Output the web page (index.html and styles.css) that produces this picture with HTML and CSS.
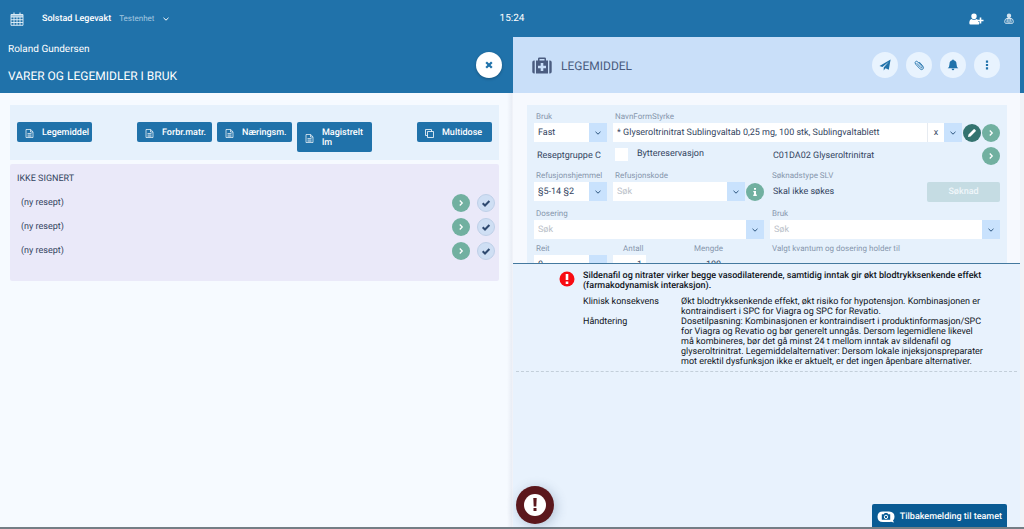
FILE: index.html
```html
<!DOCTYPE html>
<html lang="no">
<head>
<meta charset="utf-8">
<meta name="viewport" content="width=device-width, initial-scale=1">
<title>Legemiddel</title>
<link rel="stylesheet" href="styles.css">
</head>
<body>
<svg class="sprite" aria-hidden="true">
  <symbol id="chevron-down" viewBox="0 0 8 8"><path d="M1.500 2.800 4 5.200l2.500-2.400" fill="none" stroke="currentColor"/></symbol>
  <symbol id="chevron-right" viewBox="0 0 8 8"><path d="M3 2 5 4 3 6" fill="none" stroke="currentColor"/></symbol>
  <symbol id="doc" viewBox="0 0 8 9"><path d="M.5.500h4.700L7.500 2.800v5.700h-7zM5 .5V3h2.500M2 4.500h4M2 6h4M2 7.200h4" fill="none" stroke="currentColor" stroke-width=".7"/></symbol>
  <symbol id="check" viewBox="0 0 10 10"><path d="m1.700 5.200 2.300 2.300L8.400 3" fill="none" stroke="currentColor" stroke-width="2"/></symbol>
</svg>

<header class="topbar">
  <div class="topbar-unit">
    <svg class="calendar" viewBox="0 0 14 14" role="img" aria-label="Kalender"><path d="M1 2.500h12v10.800H1zM1 5h12M1 7.700h12M1 10.500h12M4 5v8.300M7 5v8.300M10 5v8.300" fill="none" stroke="currentColor" stroke-width=".9"/><path d="M3.200.5h1.600v3H3.200zM9.200.5h1.600v3H9.200zM1 2.500h12V5H1z" fill="currentColor" opacity=".65"/></svg>
    <strong>Solstad Legevakt</strong>
    <span class="unit-name">Testenhet</span>
    <svg class="icon-s"><use href="#chevron-down"/></svg>
  </div>
  <time>15:24</time>
  <div class="topbar-user">
    <svg class="add-user" viewBox="0 0 15 12" role="img" aria-label="Ny pasient"><path d="M5 .5a2.700 2.700 0 0 1 2.700 2.900C7.700 5 6.500 6.200 5 6.200S2.300 5 2.300 3.400A2.700 2.700 0 0 1 5 .5zM2.600 6c1.500 1.200 3.300 1.200 4.800 0 .8.200 1.400.7 1.800 1.400v1.500h1v2.100q-.4.500-1.200.5H1.500Q.3 11.500.3 10 .4 6.500 2.600 6z" fill="currentColor"/><path d="M11.500 4.500v6M8.500 7.500h6" stroke="currentColor" stroke-width="1.600"/></svg>
    <svg class="doctor" viewBox="0 0 10 11" role="img" aria-label="Bruker"><path d="M5 .6a2.200 2.200 0 0 1 2.200 2.200C7.200 4.200 6.200 5.300 5 5.300S2.800 4.200 2.800 2.800A2.200 2.200 0 0 1 5 .6z" fill="currentColor" opacity=".8"/><path d="M2.600 5.500h4.800q1.800.4 1.900 3.200 0 1.500-1 1.600H1.700q-1-.1-1-1.600.1-2.800 1.900-3.200zM3.200 5.500V8M5 6v4M6.800 5.500V8M2.300 8.800h1.800M6.200 8.800h1.600" fill="none" stroke="currentColor" stroke-width=".8"/></svg>
  </div>
</header>

<main class="panes">
  <section class="overview">
    <header class="overview-head">
      <div>
        <p class="patient">Roland Gundersen</p>
        <h1>VARER OG LEGEMIDLER I BRUK</h1>
      </div>
      <button class="close" aria-label="Lukk"><svg viewBox="0 0 10 10"><path d="m1.500 1.500 7 7M8.500 1.500l-7 7" stroke="currentColor" stroke-width="2.800"/></svg></button>
    </header>
    <div class="overview-body">
      <div class="actions">
        <button class="action"><svg><use href="#doc"/></svg><span>Legemiddel</span></button>
        <div class="action-group">
          <button class="action"><svg><use href="#doc"/></svg><span>Forbr.matr.</span></button>
          <button class="action"><svg><use href="#doc"/></svg><span>Næringsm.</span></button>
          <button class="action"><svg><use href="#doc"/></svg><span>Magistrelt lm</span></button>
        </div>
        <button class="action"><svg viewBox="0 0 9 9"><path d="M2.500 2.500h6v6h-6zM2.500 6.500h-2v-6h6v2" fill="none" stroke="currentColor" stroke-width=".8"/></svg><span>Multidose</span></button>
      </div>
      <section class="unsigned">
        <h2>IKKE SIGNERT</h2>
        <ul>
          <li><span>(ny resept)</span><button class="round" aria-label="Åpne"><svg><use href="#chevron-right"/></svg></button><button class="round sign" aria-label="Signer"><svg><use href="#check"/></svg></button></li>
          <li><span>(ny resept)</span><button class="round" aria-label="Åpne"><svg><use href="#chevron-right"/></svg></button><button class="round sign" aria-label="Signer"><svg><use href="#check"/></svg></button></li>
          <li><span>(ny resept)</span><button class="round" aria-label="Åpne"><svg><use href="#chevron-right"/></svg></button><button class="round sign" aria-label="Signer"><svg><use href="#check"/></svg></button></li>
        </ul>
      </section>
    </div>
  </section>

  <section class="detail">
    <header class="detail-head">
      <svg class="medkit" viewBox="0 0 20 17"><path d="M2.700 3.500v13H2q-1.700 0-1.700-1.700V5.200Q.3 3.500 2 3.500zM17.300 3.500v13h.7q1.700 0 1.700-1.700V5.200q0-1.700-1.700-1.700z" fill="currentColor"/><path fill-rule="evenodd" d="M4 3.500h2V1.700Q6 .4 7.300.4h5.400q1.300 0 1.300 1.300v1.800h2v13H4zM7.500 2v1.500h5V2zM8.700 6v2.700H6v2.600h2.700V14h2.600v-2.700H14V8.700h-2.700V6z" fill="currentColor"/></svg>
      <h2>LEGEMIDDEL</h2>
      <div class="tools">
        <button aria-label="Send"><svg viewBox="0 0 12 12"><path d="M11.600.5 9.800 10.700 6.500 9.300 4.700 11.500V8.600L9.800 2.700 3.400 8.100.5 6.900z" fill="currentColor"/></svg></button>
        <button aria-label="Vedlegg"><svg viewBox="0 0 12 12"><path d="M3.700 4.200 7.800 8.500q.7.600 1.200.1t0-1.200L4.800 2.900Q3.600 1.700 2.600 2.600T2.500 5l4.300 4.700q1.600 1.600 3 .5t-.1-3.400L6.200 3" fill="none" stroke="currentColor" stroke-width=".9"/></svg></button>
        <button aria-label="Varsler"><svg viewBox="0 0 12 12"><path d="M6 .5q.8 0 .8.800 2.700.5 2.700 3.700 0 3 1.800 4.300H.7Q2.500 8 2.500 5q0-3.200 2.700-3.700 0-.8.800-.8zM4.600 9.700h2.800Q7.200 11.200 6 11.200T4.600 9.700z" fill="currentColor"/></svg></button>
        <button aria-label="Mer"><svg viewBox="0 0 12 12"><path d="M4.900 1.500h2.200v2.200H4.900zM4.900 4.900h2.200v2.200H4.900zM4.900 8.300h2.200v2.200H4.900z" fill="currentColor"/></svg></button>
      </div>
    </header>

    <div class="form-area">
      <form class="form">
        <div class="field">
          <label for="use">Bruk</label>
          <div class="combo"><select id="use"><option>Fast</option></select><span class="arrow"><svg><use href="#chevron-down"/></svg></span></div>
        </div>
        <div class="field wide">
          <label for="drug">NavnFormStyrke</label>
          <div class="control">
            <div class="combo"><input id="drug" type="text" value="* Glyseroltrinitrat Sublingvaltab 0,25 mg, 100 stk, Sublingvaltablett"><button type="button" class="clear" aria-label="Tøm">x</button><button type="button" class="arrow" aria-label="Vis valg"><svg><use href="#chevron-down"/></svg></button></div>
            <button type="button" class="round edit" aria-label="Rediger"><svg viewBox="0 0 10 10"><path d="m1 9 .5-2.500 5.200-5.200q.5-.5 1.200.2l.6.6q.7.700.2 1.200L3.500 8.500z" fill="currentColor"/></svg></button>
            <button type="button" class="round" aria-label="Detaljer"><svg><use href="#chevron-right"/></svg></button>
          </div>
        </div>

        <span class="value">Reseptgruppe C</span>
        <label class="tick"><input type="checkbox"><span>Byttereservasjon</span></label>
        <div class="atc"><span class="value">C01DA02 Glyseroltrinitrat</span><button type="button" class="round" aria-label="Vis ATC"><svg><use href="#chevron-right"/></svg></button></div>

        <div class="field roomy">
          <label for="ref">Refusjonshjemmel</label>
          <div class="combo"><select id="ref"><option>§5-14 §2</option></select><span class="arrow"><svg><use href="#chevron-down"/></svg></span></div>
        </div>
        <div class="field roomy">
          <label for="code">Refusjonskode</label>
          <div class="control">
            <div class="combo"><input id="code" type="text" placeholder="Søk"><button type="button" class="arrow" aria-label="Vis valg"><svg><use href="#chevron-down"/></svg></button></div>
            <button type="button" class="round" aria-label="Informasjon"><svg viewBox="0 0 10 10"><path d="M4 1h2v1.800H4zM3.300 4H6v3.600h.8V9H3.300V7.600H4V5.300h-.7z" fill="currentColor"/></svg></button>
          </div>
        </div>
        <div class="application roomy">
          <div class="field"><span class="caption">Søknadstype SLV</span><span class="value">Skal ikke søkes</span></div>
          <button type="button" class="apply" disabled>Søknad</button>
        </div>

        <div class="field dosage">
          <label for="dose">Dosering</label>
          <div class="combo"><input id="dose" type="text" placeholder="Søk"><button type="button" class="arrow" aria-label="Vis valg"><svg><use href="#chevron-down"/></svg></button></div>
        </div>
        <div class="field">
          <label for="usage">Bruk</label>
          <div class="combo"><input id="usage" type="text" placeholder="Søk"><button type="button" class="arrow" aria-label="Vis valg"><svg><use href="#chevron-down"/></svg></button></div>
        </div>

        <div class="field">
          <label for="reit">Reit</label>
          <div class="combo"><select id="reit"><option>0</option></select><span class="arrow"><svg><use href="#chevron-down"/></svg></span></div>
        </div>
        <div class="amounts">
          <div class="field count"><label for="count">Antall</label><div class="combo"><input id="count" type="text" value="1"></div></div>
          <div class="field total"><span class="caption">Mengde</span><span class="value">100</span></div>
        </div>
        <div class="field"><span class="caption">Valgt kvantum og dosering holder til</span></div>
      </form>
    </div>

    <div class="warning" role="alert">
      <article>
        <svg class="alert-icon" viewBox="0 0 16 16"><circle cx="8" cy="8" r="7.500" fill="#f80b12"/><path d="M6.700 3h2.600v6H6.700zM6.700 10.400h2.600v2.500H6.700z" fill="#fff"/></svg>
        <div class="warning-text">
          <h3>Sildenafil og nitrater virker begge vasodilaterende, samtidig inntak gir økt blodtrykksenkende effekt (farmakodynamisk interaksjon).</h3>
          <dl>
            <dt>Klinisk konsekvens</dt>
            <dd>Økt blodtrykksenkende effekt, økt risiko for hypotensjon. Kombinasjonen er kontraindisert i SPC for Viagra og SPC for Revatio.</dd>
            <dt>Håndtering</dt>
            <dd>Dosetilpasning: Kombinasjonen er kontraindisert i produktinformasjon/SPC for Viagra og Revatio og bør generelt unngås. Dersom legemidlene likevel må kombineres, bør det gå minst 24 t mellom inntak av sildenafil og glyseroltrinitrat. Legemiddelalternativer: Dersom lokale injeksjonspreparater mot erektil dysfunksjon ikke er aktuelt, er det ingen åpenbare alternativer.</dd>
          </dl>
        </div>
      </article>
    </div>
  </section>
</main>

<button class="alarm" aria-label="Advarsler"><svg viewBox="0 0 22 22"><circle cx="11" cy="11" r="11" fill="#fff"/><path d="M9.300 4h3.400l-.4 8.500H9.700zM9.500 14h3v3h-3z" fill="currentColor"/></svg></button>
<button class="feedback"><svg viewBox="0 0 18 12"><path d="M6 .5h6q5.500.3 5.500 5.200 0 2.500-1.500 3.800l1 2-3-.8q-1 .4-2 .4H6Q.5 10.800.5 5.700T6 .5z" fill="#fff"/><path d="M4.800 3.300h2.100l.8-1.200h2.600l.8 1.200h2.100v5.500H4.800z" fill="currentColor"/><circle cx="9" cy="5.900" r="1.700" fill="none" stroke="#fff"/></svg>Tilbakemelding til teamet</button>
</body>
</html>
```
FILE: styles.css
```css
* { box-sizing: border-box; }

body {
  margin: 0;
  height: 100vh;
  overflow: hidden;
  display: flex;
  flex-direction: column;
  border-bottom: 2px solid #747e86;
  background: #f0f2f8;
  color: #34455f;
  font: 8px/10px Roboto, sans-serif;
  text-rendering: geometricPrecision;
}

h1, h2, h3, p, ul, dl, dd { margin: 0; padding: 0; font-weight: 400; }
ul { list-style: none; }

button, input, select { font: inherit; color: inherit; text-rendering: inherit; border: 0; margin: 0; padding: 0; border-radius: 0; }
button { display: flex; align-items: center; justify-content: center; flex: none; }
svg { display: block; flex: none; width: 8px; height: 8px; }
.sprite { position: absolute; width: 0; height: 0; }

.topbar {
  display: grid;
  grid-template-columns: 1fr auto 1fr;
  align-items: center;
  min-height: 37px;
  padding: 0 10px;
  background: #2072aa;
  color: #fff;
}
.topbar time { font-size: 10px; }
.topbar-unit { display: flex; align-items: center; gap: 8px; }
.topbar-unit strong { font-size: 9px; font-weight: 500; }
.calendar { width: 14px; height: 14px; margin-right: 10px; color: #e4f0f9; }
.unit-name { color: #a5c8e0; }
.topbar-user { display: flex; justify-content: flex-end; align-items: center; gap: 20px; }
.add-user { width: 15px; height: 12px; }
.doctor { width: 10px; height: 11px; }

.panes {
  flex: 1;
  min-height: 0;
  display: grid;
  grid-template-columns: 1fr 1fr;
  background: linear-gradient(#2072aa 56px, #f0f2f8 56px);
}

.overview { display: flex; flex-direction: column; min-width: 0; }
.overview-head {
  display: flex;
  justify-content: space-between;
  align-items: center;
  min-height: 56px;
  padding: 0 10px 0 8px;
  background: #2072aa;
  color: #fff;
}
.overview-head > div { display: grid; gap: 12px; padding-bottom: 5px; }
.patient { font-size: 10px; line-height: 14px; }
h1 { font-size: 12px; line-height: 14px; }
.close { width: 26px; height: 26px; border-radius: 50%; background: #fff; color: #2072aa; box-shadow: 0 1px 3px #0004; }

.overview-body {
  flex: 1;
  display: flex;
  flex-direction: column;
  gap: 4px;
  padding: 12px 13px 0 10px;
  background: linear-gradient(90deg, #f6faff calc(100% - 5px), #e9edf5);
}
.actions {
  display: flex;
  justify-content: space-between;
  align-items: flex-start;
  min-height: 55px;
  padding: 17px 7px 8px;
  background: #e6f1fc;
}
.action-group { display: flex; align-items: flex-start; gap: 5px; }
.action {
  justify-content: flex-start;
  gap: 8px;
  width: 75px;
  min-height: 20px;
  padding: 6px 4px 4px 8px;
  border-radius: 2px;
  background: #2072aa;
  color: #fff;
  font-size: 9px;
  font-weight: 500;
  text-align: left;
}
.action svg { width: 9px; height: 9px; }

.unsigned { min-height: 117px; padding: 10px 4px 0 7px; border-radius: 2px; background: #eae9f9; }
.unsigned h2 { font-size: 9px; margin-bottom: 7px; }
.unsigned li { display: flex; align-items: center; gap: 7px; min-height: 24px; padding-left: 4px; font-size: 9px; }
.unsigned li span { flex: 1; }

.round { width: 18px; height: 18px; border-radius: 50%; background: #71b0a0; color: #fff; }
.round svg { width: 10px; height: 10px; }
.sign { background: #cfdff4; border: 1px solid #bfd0e8; color: #2f4a70; }
.edit { background: #34736f; }

.detail { display: flex; flex-direction: column; min-width: 0; margin: 0 4px 0 1px; }
.detail-head {
  display: flex;
  align-items: center;
  gap: 9px;
  min-height: 56px;
  padding: 0 20px 0 19px;
  background: #c9dff9;
  color: #4a5c80;
}
.detail-head h2 { flex: 1; padding-top: 2px; font-size: 12px; line-height: 14px; }
.medkit { width: 20px; height: 17px; }
.tools { display: flex; gap: 8px; }
.tools button { width: 26px; height: 26px; border-radius: 50%; background: #e8f3fe; color: #2072aa; }
.tools svg { width: 12px; height: 12px; }

.form-area { flex: 158 1 0; min-height: 0; overflow: hidden; padding: 12px 13px 0 14px; background: #f6f9fe; }
.form {
  display: grid;
  grid-template-columns: 73fr 151fr 230fr;
  gap: 4px 6px;
  padding: 6px 7px;
  background: #e6f1fc;
}
.field { display: flex; flex-direction: column; min-width: 0; }
.field label, .caption { padding-left: 2px; line-height: 12px; color: #8797ad; white-space: nowrap; }
.wide { grid-column: span 2; }
.dosage { grid-column: span 2; }
.roomy { margin-bottom: 2px; }
.control { display: flex; align-items: center; gap: 1px; }
.combo { flex: 1; display: flex; min-width: 0; height: 19px; background: #fff; font-size: 9px; }
.field > .combo { flex: none; }
.combo input, .combo select { flex: 1; width: 0; min-width: 0; padding: 0 4px; background: none; appearance: none; }
.combo input::placeholder { color: #b9c0c8; opacity: 1; }
.arrow { display: flex; align-items: center; justify-content: center; width: 18px; background: #c9e2fd; color: #2d5680; }
.clear { width: 17px; border-left: 1px solid #e6ebf1; background: none; }
.value { padding-left: 3px; font-size: 9px; line-height: 20px; white-space: nowrap; }
.tick { display: flex; align-items: center; gap: 9px; padding: 0 0 4px 2px; font-size: 9px; }
.tick input { width: 13px; height: 13px; margin: 0; background: #fff; appearance: none; }
.atc, .application { display: flex; justify-content: space-between; align-items: center; }
.application { align-items: flex-end; }
.apply { width: 73px; height: 20px; border-radius: 2px; background: #c5dce3; color: #eff6fa; font-size: 9px; font-weight: 500; }
.amounts { display: flex; gap: 46px; }
.count { width: 33px; }
.count label { padding-left: 10px; }
.count input { text-align: right; }
.total .value { padding-left: 14px; }

.warning {
  flex: 263 1 0;
  min-height: 0;
  border-top: 1px solid #44799f;
  padding: 0 3px;
  background: #e8f2fd;
  color: #10151c;
}
.warning article { display: flex; align-items: flex-start; gap: 8px; padding: 7px 32px 4px 43px; border-bottom: 1px dashed #c3cfda; }
.alert-icon { width: 16px; height: 16px; }
.warning-text { flex: 1; font-size: 9px; }
.warning h3 { font-size: 9px; font-weight: 500; margin-bottom: 6px; }
.warning dl { display: grid; grid-template-columns: 98px 1fr; }

.alarm {
  position: fixed;
  left: calc(50% + 4px);
  bottom: 5px;
  width: 38px;
  height: 38px;
  border-radius: 50%;
  background: #5b171c;
  color: #5b171c;
  box-shadow: 2px 2px 12px #3452784d;
}
.alarm svg { width: 22px; height: 22px; }
.feedback {
  position: fixed;
  right: 17px;
  bottom: 2px;
  gap: 5px;
  height: 23px;
  padding: 2px 5px 0;
  border-radius: 2px 2px 0 0;
  background: #095b94;
  color: #fff;
  font-size: 9px;
  font-weight: 500;
}
.feedback svg { width: 18px; height: 12px; color: #095b94; }
```
